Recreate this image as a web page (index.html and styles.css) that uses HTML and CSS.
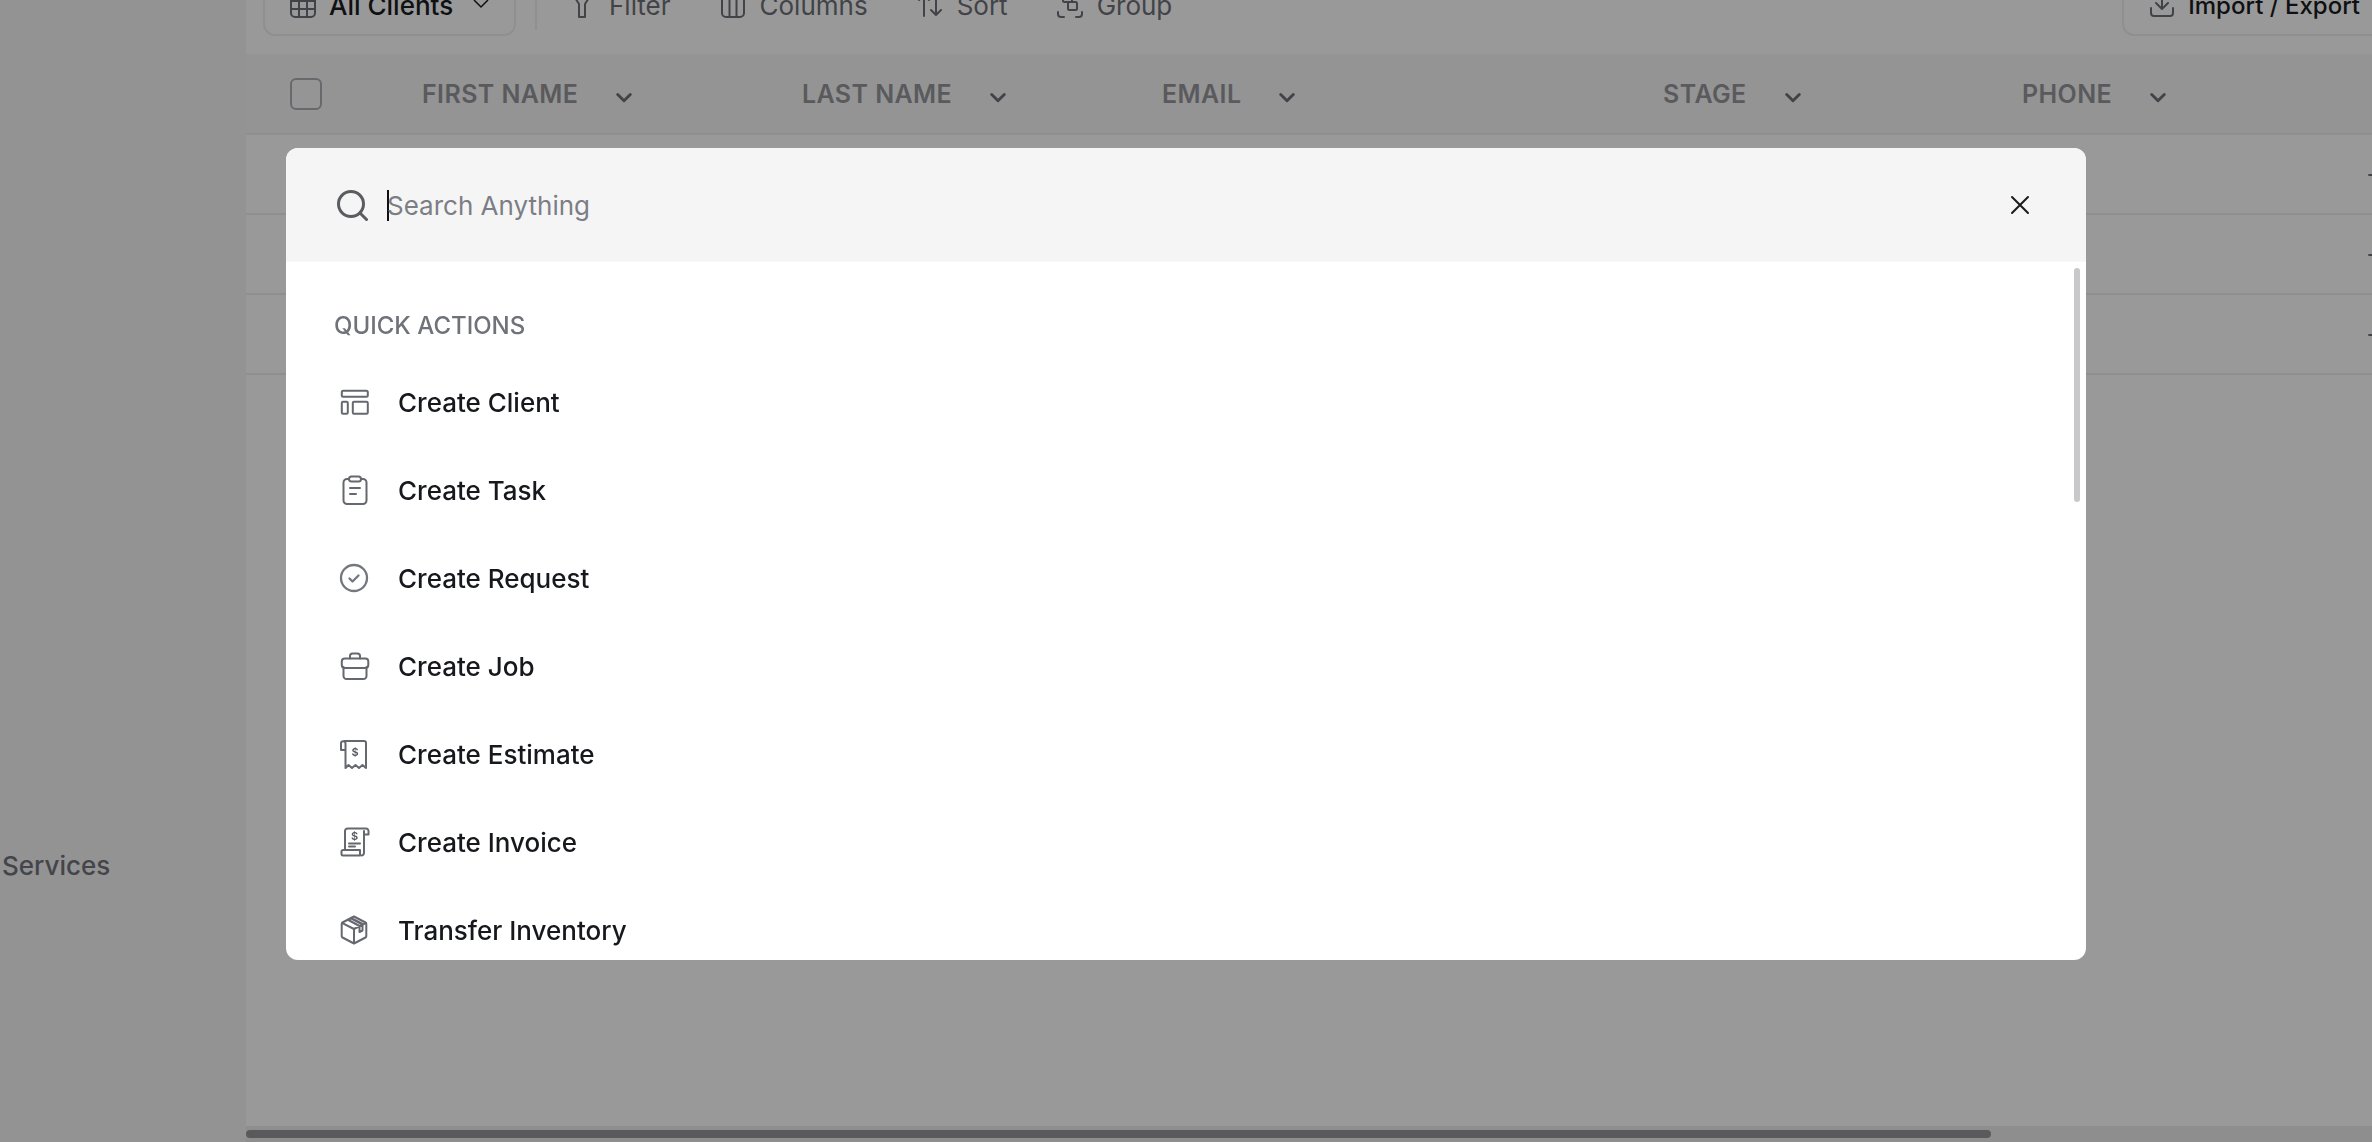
FILE: index.html
```html
<!DOCTYPE html>
<html lang="en">
<head>
<meta charset="utf-8">
<title>Clients</title>
<link rel="stylesheet" href="styles.css">
</head>
<body>
<div class="app">
  <aside class="sidebar"><span class="nav-item">Services</span></aside>
  <main class="main">
    <div class="toolbar">
      <div class="view-btn">
        <svg class="tb-icon" viewBox="0 0 26 26"><rect x="1" y="1" width="24" height="24" rx="4"/><path d="M1 9h24M1 17h24M9 9v16M17 9v16"/></svg>
        <span class="tb-strong">All Clients</span>
        <svg class="tb-chev" viewBox="0 0 16 10"><path d="M1 1l7 7 7-7"/></svg>
      </div>
      <div class="tb-sep"></div>
      <div class="tool tool-filter"><svg class="tb-icon" viewBox="0 0 26 26"><path d="M3 1h20l-7 11v13h-6V12z"/></svg><span>Filter</span></div>
      <div class="tool"><svg class="tb-icon" viewBox="0 0 26 26"><rect x="2" y="1" width="22" height="24" rx="4"/><path d="M9.5 1v24M16.5 1v24"/></svg><span>Columns</span></div>
      <div class="tool"><svg class="tb-icon" viewBox="0 0 26 26"><path d="M7 24V3M2 8l5-5 5 5M19 2v21M14 18l5 5 5-5"/></svg><span>Sort</span></div>
      <div class="tool"><svg class="tb-icon" viewBox="0 0 26 26"><path d="M1 20v2a3 3 0 0 0 3 3h3M19 25h3a3 3 0 0 0 3-3v-2M1 6V4M25 6V4"/><rect x="6" y="2" width="9" height="8" rx="1.5"/><rect x="11" y="10" width="9" height="8" rx="1.5"/></svg><span>Group</span></div>
      <div class="import-btn">
        <svg class="tb-icon" viewBox="0 0 26 26"><path d="M13 2v15M7 11l6 6 6-6M2 16v5a3 3 0 0 0 3 3h16a3 3 0 0 0 3-3v-5"/></svg>
        <span class="tb-strong">Import / Export</span>
      </div>
    </div>
    <div class="thead">
      <div class="th-check"><span class="checkbox"></span></div>
      <div class="th"><span>FIRST NAME</span><svg class="chev" viewBox="0 0 14 10"><path d="M1.5 2l5.5 5.5L12.500 2"/></svg></div>
      <div class="th"><span>LAST NAME</span><svg class="chev" viewBox="0 0 14 10"><path d="M1.5 2l5.5 5.5L12.500 2"/></svg></div>
      <div class="th"><span>EMAIL</span><svg class="chev" viewBox="0 0 14 10"><path d="M1.5 2l5.5 5.5L12.500 2"/></svg></div>
      <div class="th"><span>STAGE</span><svg class="chev" viewBox="0 0 14 10"><path d="M1.5 2l5.5 5.5L12.500 2"/></svg></div>
      <div class="th"><span>PHONE</span><svg class="chev" viewBox="0 0 14 10"><path d="M1.5 2l5.5 5.5L12.500 2"/></svg></div>
    </div>
    <div class="trow"><span class="dash">-</span></div>
    <div class="trow"><span class="dash">-</span></div>
    <div class="trow"><span class="dash">-</span></div>
    <div class="spacer"></div>
    <div class="hscroll"><div class="hthumb"></div></div>
  </main>
</div>

<div class="overlay">
  <section class="modal">
    <header class="search-bar">
      <svg class="search-icon" viewBox="0 0 32 32"><circle cx="15" cy="15" r="12.500"/><path d="M24 24l6.500 6.500"/></svg>
      <div class="search-field"><span class="placeholder">Search Anything</span></div>
      <svg class="close-icon" viewBox="0 0 20 20"><path d="M2 2l16 16M18 2L2 18"/></svg>
    </header>
    <div class="results">
      <div class="scroll-thumb"></div>
      <h2 class="section-title">QUICK ACTIONS</h2>
      <ul class="actions">
        <li class="action">
          <svg class="a-icon" viewBox="0 0 30 30"><rect x="1.800" y="3.800" width="26" height="6" rx="1.500"/><rect x="1.800" y="14.800" width="6" height="12" rx="1.200"/><rect x="12.800" y="14.800" width="15" height="12" rx="1.200"/></svg>
          <span>Create Client</span>
        </li>
        <li class="action">
          <svg class="a-icon" viewBox="0 0 30 30"><path d="M9 4H7a3.500 3.500 0 0 0-3.500 3.500v18A3.500 3.500 0 0 0 7 29h16a3.500 3.500 0 0 0 3.500-3.500v-18A3.500 3.500 0 0 0 23 4h-2"/><rect x="9" y="1.500" width="12" height="5" rx="2.500"/><path d="M10 13h10M10 19h6"/></svg>
          <span>Create Task</span>
        </li>
        <li class="action">
          <svg class="a-icon a-icon-round" viewBox="0 0 30 30"><circle cx="15" cy="15" r="13"/><path d="M10.500 15.500l3 3 6-6"/></svg>
          <span>Create Request</span>
        </li>
        <li class="action">
          <svg class="a-icon" viewBox="0 0 30 30"><path d="M10 7.500V5a2.500 2.500 0 0 1 2.500-2.500h5A2.500 2.500 0 0 1 20 5v2.500"/><rect x="1.800" y="7.500" width="26.500" height="9.500" rx="3"/><path d="M3.500 16v9a3 3 0 0 0 3 3h17a3 3 0 0 0 3-3v-9"/></svg>
          <span>Create Job</span>
        </li>
        <li class="action">
          <svg class="a-icon" viewBox="0 0 30 30"><path d="M4.500 2h19.500a2 2 0 0 1 2 2v25l-3.500-3-3.500 3-3.500-3-3.500 3-3.500-3-3 3V4.500a2 2 0 0 0-4.500 0v6.500h4.500"/><text class="a-dollar" x="15" y="16.500">$</text></svg>
          <span>Create Estimate</span>
        </li>
        <li class="action">
          <svg class="a-icon" viewBox="0 0 30 30"><path d="M5 23V4a2.500 2.500 0 0 1 2.500-2.500H26a2.500 2.500 0 0 1 2.500 2.500v3.500H24M24 4v22a2.500 2.500 0 0 1-2.500 2.500"/><path d="M3 23h17v5.500H3a1.500 1.500 0 0 1-1.500-1.500v-2.500A1.500 1.500 0 0 1 3 23z"/><path d="M9 16.500h11M9 19.500h6"/><text class="a-dollar" x="14.500" y="12.500">$</text></svg>
          <span>Create Invoice</span>
        </li>
        <li class="action">
          <svg class="a-icon" viewBox="0 0 30 30"><path d="M14 1.500l11.500 6a1.500 1.500 0 0 1 .8 1.300v12.400a1.500 1.500 0 0 1-.8 1.300L14 28.500 2.500 22.500a1.500 1.500 0 0 1-.8-1.300V8.800a1.500 1.500 0 0 1 .8-1.300zM1.900 7.800L14 14l12.100-6.200M14 14v14.500M7.500 4.500l12 6.500v6l3-1.500v-6l-12-6.500M11 2.800l12 6.400"/></svg>
          <span>Transfer Inventory</span>
        </li>
      </ul>
    </div>
  </section>
</div>
</body>
</html>
```

FILE: styles.css
```css
* { box-sizing: border-box; }

html, body {
  margin: 0;
  height: 100%;
  overflow: hidden;
  background: #fff;
  font-family: Inter, "Noto Sans", sans-serif;
}

.app {
  display: flex;
  height: 1142px;
}

.sidebar {
  width: 246px;
  flex: none;
  background: #f5f5f5;
  padding: 851px 0 0 2px;
}

.nav-item {
  font-size: 26px;
  line-height: 30px;
  font-weight: 500;
  color: #72747c;
}

.main {
  flex: 1;
  min-width: 0;
  display: flex;
  flex-direction: column;
  overflow: hidden;
}

.toolbar {
  height: 54px;
  flex: none;
  display: flex;
  align-items: flex-end;
  padding: 0 0 18px 17px;
  font-size: 26px;
  color: #6e7178;
}

.view-btn {
  width: 253px;
  height: 62px;
  flex: none;
  display: flex;
  align-items: center;
  padding-left: 25px;
  border: 2px solid #eeeff1;
  border-radius: 12px;
}

.tb-icon {
  width: 26px;
  height: 26px;
  flex: none;
  fill: none;
  stroke: #6e7178;
  stroke-width: 2;
  stroke-linecap: round;
  stroke-linejoin: round;
}

.tb-strong {
  color: #1a1c22;
  font-weight: 500;
  margin-left: 13px;
  white-space: nowrap;
}

.tb-chev {
  width: 16px;
  height: 10px;
  margin-left: 20px;
  margin-top: -2px;
  fill: none;
  stroke: #1a1c22;
  stroke-width: 1.500;
}

.tb-sep {
  width: 2px;
  height: 30px;
  margin: 0 32px 0 19px;
  flex: none;
  background: #eeeff1;
  align-self: flex-start;
}

.tool {
  height: 62px;
  display: flex;
  align-items: center;
  gap: 14px;
  margin-right: 49px;
  flex: none;
}

.import-btn {
  height: 62px;
  margin-left: auto;
  margin-right: -30px;
  flex: none;
  display: flex;
  align-items: center;
  padding: 0 40px 0 25px;
  border: 2px solid #eeeff1;
  border-radius: 12px;
  font-size: 24px;
}

.thead {
  height: 81px;
  flex: none;
  display: grid;
  grid-template-columns: 176px 380px 360px 501px 359px 1fr;
  align-items: center;
  background: #f7f7f8;
  border-bottom: 2px solid #eeeff1;
}

.th-check {
  padding-left: 44px;
  display: flex;
}

.checkbox {
  width: 32px;
  height: 32px;
  border: 2px solid #aeb0b6;
  border-radius: 6px;
  background: #f9f9fa;
}

.th {
  display: flex;
  align-items: center;
  gap: 38px;
  font-size: 25px;
  font-weight: 600;
  letter-spacing: 0.4px;
  color: #96979c;
  white-space: nowrap;
}

.chev {
  width: 16px;
  height: 12px;
  margin-top: 8px;
  fill: none;
  stroke: #6e7178;
  stroke-width: 2.500;
  stroke-linecap: round;
  stroke-linejoin: round;
}

.trow {
  height: 80px;
  flex: none;
  display: flex;
  align-items: center;
  justify-content: flex-end;
  border-bottom: 2px solid #eeeff1;
}

.trow:first-of-type { height: 78px; }

.dash {
  margin-right: -6px;
  font-size: 25px;
  color: #6e7178;
}

.spacer { flex: 1; }

.hscroll {
  height: 16px;
  flex: none;
  background: #ededed;
  padding-top: 4px;
}

.hthumb {
  width: 1745px;
  height: 8px;
  border-radius: 4px;
  background: #96979c;
}

.overlay {
  position: fixed;
  inset: 0;
  display: flex;
  justify-content: center;
  align-items: flex-start;
  padding-top: 148px;
  background: rgba(0, 0, 0, 0.4);
}

.modal {
  width: 1800px;
  height: 812px;
  display: flex;
  flex-direction: column;
  overflow: hidden;
  background: #fff;
  border-radius: 12px;
}

.search-bar {
  height: 114px;
  flex: none;
  display: flex;
  align-items: center;
  padding: 0 56px 0 50px;
  background: #f5f5f5;
  border-bottom: 1px solid #f8f8f8;
}

.search-icon {
  width: 32px;
  height: 32px;
  flex: none;
  fill: none;
  stroke: #5a5c60;
  stroke-width: 3;
  stroke-linecap: round;
}

.search-field {
  flex: 1;
  margin-left: 19px;
  margin-top: 2px;
  height: 31px;
  border-left: 2px solid #111;
  display: flex;
  align-items: center;
}

.placeholder {
  margin-left: -2px;
  font-size: 26px;
  line-height: 31px;
  color: #7c7e86;
  white-space: nowrap;
}

.close-icon {
  width: 20px;
  height: 20px;
  flex: none;
  fill: none;
  stroke: #1a1a1a;
  stroke-width: 2;
  stroke-linecap: round;
}

.results {
  position: relative;
  flex: 1;
  min-height: 0;
  overflow: hidden;
  padding: 50px 0 0 48px;
}

.scroll-thumb {
  position: absolute;
  top: 6px;
  right: 6px;
  width: 6px;
  height: 234px;
  border-radius: 3px;
  background: #c8c8cb;
}

.section-title {
  margin: 0;
  font-size: 24px;
  line-height: 28px;
  font-weight: 500;
  color: #6f7279;
}

.actions {
  list-style: none;
  margin: 18px 0 0;
  padding: 0;
}

.action {
  height: 88px;
  display: flex;
  align-items: center;
  gap: 28px;
  padding-left: 6px;
  font-size: 26px;
  font-weight: 500;
  color: #16181d;
}

.a-icon {
  width: 30px;
  height: 30px;
  flex: none;
  fill: none;
  stroke: #66686f;
  stroke-width: 2;
  stroke-linecap: round;
  stroke-linejoin: round;
}

.a-icon-round {
  margin-left: -1px;
  margin-right: 1px;
  stroke: #75777e;
  stroke-width: 2.300;
}

.a-dollar {
  font-family: Inter, sans-serif;
  font-size: 11px;
  font-weight: 600;
  fill: #555861;
  stroke: none;
  text-anchor: middle;
}
```
